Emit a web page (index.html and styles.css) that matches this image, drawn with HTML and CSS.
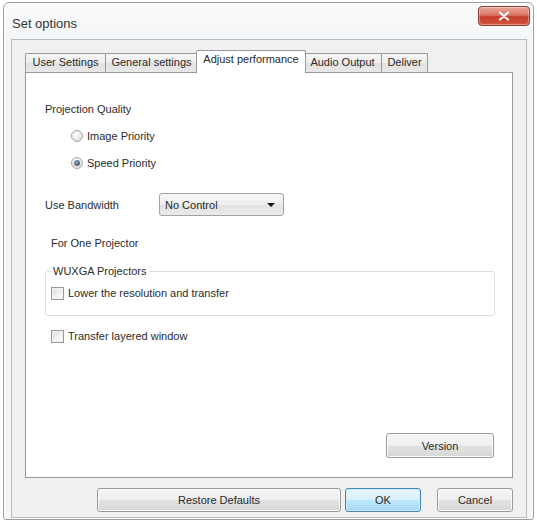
FILE: index.html
```html
<!DOCTYPE html>
<html lang="en">
<head>
    <meta charset="UTF-8">
    <title>Set options</title>
    <link rel="stylesheet" href="styles.css">
</head>
<body>
    <div class="window">
        <div class="titlebar">
            <span class="title">Set options</span>
            <button class="close-btn" type="button">
                <svg width="12" height="10" viewBox="0 0 12 10">
                    <path d="M2 1.5 L10 8.5 M10 1.5 L2 8.5" stroke="#ffffff" stroke-width="2.2" stroke-linecap="round"/>
                </svg>
            </button>
        </div>

        <div class="client">
            <div class="tabs">
                <div class="tab tab-user">User Settings</div>
                <div class="tab tab-general">General settings</div>
                <div class="tab tab-active">Adjust performance</div>
                <div class="tab tab-audio">Audio Output</div>
                <div class="tab tab-deliver">Deliver</div>
            </div>

            <div class="panel">
                <div class="label">Projection Quality</div>
                <div class="radio-list">
                    <label class="radio-row"><span class="radio"></span>Image Priority</label>
                    <label class="radio-row"><span class="radio checked"></span>Speed Priority</label>
                </div>

                <div class="bandwidth-row">
                    <span class="bandwidth-label">Use Bandwidth</span>
                    <div class="select">
                        <span>No Control</span>
                        <span class="arrow"></span>
                    </div>
                </div>

                <div class="label sub-label">For One Projector</div>

                <fieldset class="group">
                    <legend>WUXGA Projectors</legend>
                    <label class="check-row"><span class="checkbox"></span>Lower the resolution and transfer</label>
                </fieldset>

                <label class="check-row standalone"><span class="checkbox"></span>Transfer layered window</label>

                <div class="version-row">
                    <button class="btn btn-version" type="button">Version</button>
                </div>
            </div>

            <div class="button-row">
                <button class="btn btn-restore" type="button">Restore Defaults</button>
                <button class="btn btn-ok" type="button">OK</button>
                <button class="btn btn-cancel" type="button">Cancel</button>
            </div>
        </div>
    </div>
</body>
</html>
```

FILE: styles.css
```css
:root {
    --text: #2b2b2b;
    --frame: #f4f5f6;
    --face: #f0f0f0;
    --tab-border: #969a9f;
    --btn-border: #9a9a9a;
}

body {
    margin: 0;
    background: #ffffff;
    font-family: "Liberation Sans", Arial, sans-serif;
    font-size: 11px;
    color: var(--text);
}

/* outer window frame */
.window {
    box-sizing: border-box;
    width: 531px;
    height: 518px;
    margin: 2px 0 0 3px;
    border: 1px solid #9a9ea3;
    border-radius: 6px 6px 3px 3px;
    background: linear-gradient(to bottom, #fafbfc 0%, var(--frame) 40px, var(--frame) 100%);
    box-shadow: inset 0 0 0 1px #ffffff;
    display: flex;
    flex-direction: column;
}

.titlebar {
    height: 36px;
    display: flex;
    justify-content: space-between;
    align-items: flex-start;
}

.title {
    font-size: 13px;
    color: #333;
    margin: 13px 0 0 8px;
}

.close-btn {
    width: 52px;
    height: 20px;
    margin: 3px 3px 0 0;
    padding: 0;
    border: 1px solid #8e3b30;
    border-radius: 4px;
    background: linear-gradient(to bottom, #eaa898 0%, #db7462 45%, #c63b2b 55%, #d5563f 100%);
    box-shadow: inset 0 0 0 1px rgba(255, 255, 255, 0.35);
    display: flex;
    justify-content: center;
    align-items: center;
}

/* client area */
.client {
    flex: 1;
    margin: 0 6px 1px 7px;
    padding: 10px 13px 0 13px;
    border: 1px solid #b9bcc0;
    background: var(--face);
    display: flex;
    flex-direction: column;
}

.tabs {
    height: 22px;
    display: flex;
    align-items: flex-end;
}

.tab {
    box-sizing: border-box;
    height: 19px;
    margin-left: -1px;
    border: 1px solid var(--tab-border);
    border-bottom: none;
    border-radius: 2px 2px 0 0;
    background: linear-gradient(to bottom, #f5f5f5 0%, #eeeeee 50%, #e2e2e2 51%, #e7e7e7 100%);
    text-align: center;
    line-height: 17px;
    white-space: nowrap;
}

.tab-user { width: 81px; margin-left: 0; }
.tab-general { width: 93px; }
.tab-audio { width: 79px; }
.tab-deliver { width: 47px; }

.tab-active {
    width: 110px;
    height: 23px;
    margin: 0 -2px -1px -2px;
    background: #ffffff;
    position: relative;
    z-index: 1;
    line-height: 17px;
    padding-bottom: 4px;
}

.panel {
    box-sizing: border-box;
    height: 406px;
    border: 1px solid var(--tab-border);
    background: #ffffff;
    padding: 0 17px 19px 19px;
    display: flex;
    flex-direction: column;
}

.label {
    margin-top: 29px;
    line-height: 14px;
}

.radio-list {
    margin-top: 6px;
    padding-left: 26px;
}

.radio-row {
    height: 27px;
    display: flex;
    align-items: center;
}

.radio {
    box-sizing: border-box;
    width: 12px;
    height: 12px;
    margin-right: 4px;
    border: 1px solid #a8a8a8;
    border-radius: 50%;
    background: radial-gradient(circle at 40% 35%, #ffffff 0%, #e6e6e6 60%, #d2d2d2 100%);
    display: flex;
    justify-content: center;
    align-items: center;
}

.radio.checked::after {
    content: "";
    width: 6px;
    height: 6px;
    border-radius: 50%;
    background: radial-gradient(circle at 40% 35%, #8fa6b8 0%, #4b6276 70%);
}

.bandwidth-row {
    margin-top: 17px;
    height: 23px;
    display: flex;
    align-items: center;
}

.bandwidth-label {
    width: 114px;
}

.select {
    box-sizing: border-box;
    width: 125px;
    height: 23px;
    padding: 0 8px 0 5px;
    border: 1px solid #a3a3a3;
    border-radius: 3px;
    background: linear-gradient(to bottom, #f7f7f7 0%, #eeeeee 50%, #e2e2e2 51%, #eaeaea 100%);
    display: flex;
    justify-content: space-between;
    align-items: center;
}

.arrow {
    width: 0;
    height: 0;
    border-left: 4px solid transparent;
    border-right: 4px solid transparent;
    border-top: 4px solid #111;
}

.sub-label {
    margin-top: 20px;
    padding-left: 6px;
}

.group {
    margin: 14px 0 0 0;
    padding: 0 0 15px 5px;
    border: 1px solid #dcdee1;
    border-radius: 3px;
}

.group legend {
    padding: 0 2px;
    line-height: 14px;
}

.check-row {
    height: 14px;
    margin-top: 8px;
    display: flex;
    align-items: center;
}

.check-row.standalone {
    margin: 13px 0 0 6px;
}

.checkbox {
    box-sizing: border-box;
    width: 13px;
    height: 13px;
    margin-right: 4px;
    border: 1px solid #999;
    background: linear-gradient(135deg, #dcdcdc 0%, #f4f4f4 60%, #ffffff 100%);
    box-shadow: inset 0 0 0 1px #f2f2f2;
}

.version-row {
    margin-top: auto;
    display: flex;
    justify-content: flex-end;
    padding-right: 1px;
}

.btn {
    box-sizing: border-box;
    height: 24px;
    padding: 0;
    border: 1px solid var(--btn-border);
    border-radius: 3px;
    background: linear-gradient(to bottom, #f6f6f6 0%, #eeeeee 50%, #e1e1e1 51%, #d8d8d8 100%);
    box-shadow: inset 0 0 0 1px #fbfbfb;
    font-family: inherit;
    font-size: 11px;
    color: var(--text);
}

.btn-version { width: 108px; height: 25px; }

.button-row {
    margin-top: 10px;
    display: flex;
    justify-content: flex-end;
}

.btn-restore { width: 244px; }
.btn-ok {
    width: 76px;
    margin-left: 4px;
    border-color: #4a86b5;
    background: linear-gradient(to bottom, #eaf6fd 0%, #d9f0fc 50%, #bee6fd 51%, #a7d9f5 100%);
    box-shadow: inset 0 0 0 1px #c9ecfb;
}
.btn-cancel { width: 76px; margin-left: 16px; }
```
